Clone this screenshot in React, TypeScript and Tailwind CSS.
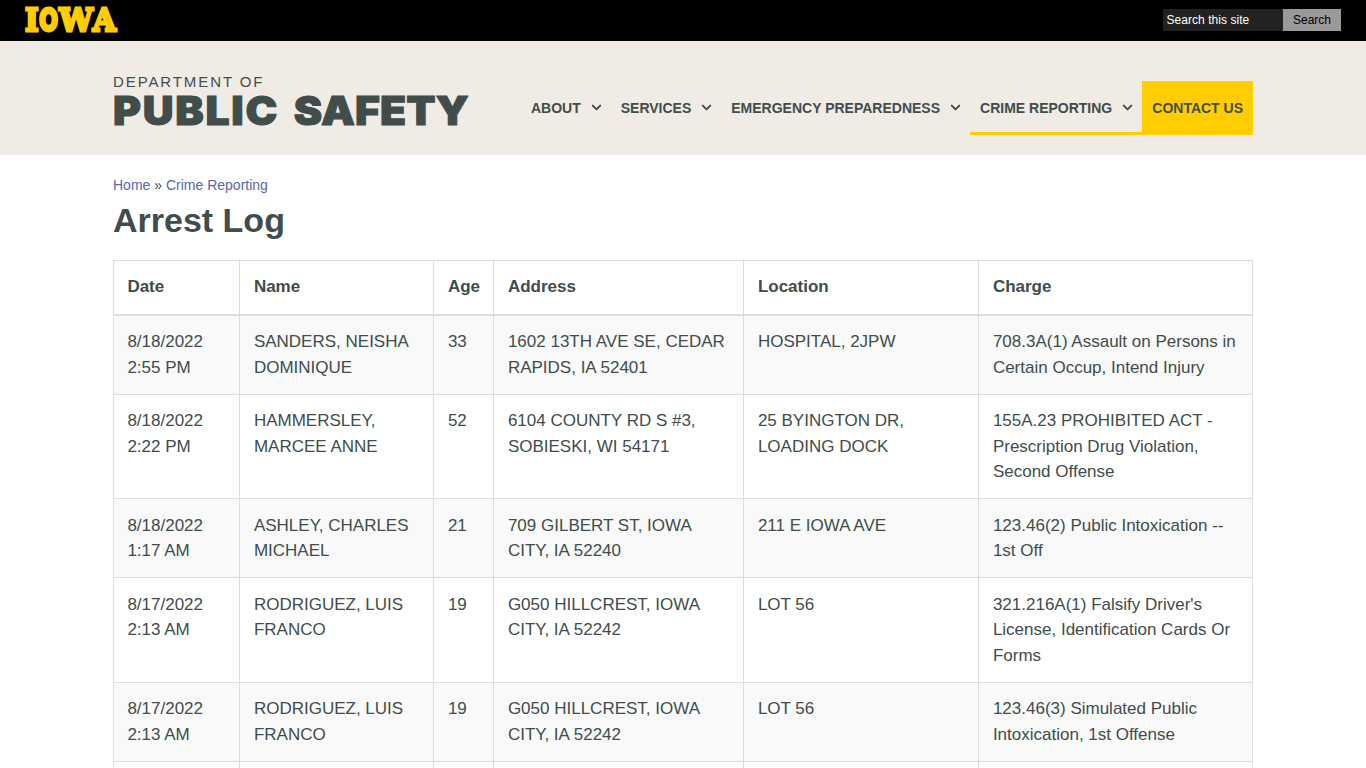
import { ChevronDown } from 'lucide-react';
import clsx from 'clsx';

interface IArrest {
  date: string;
  time: string;
  name: string;
  age: number;
  address: string;
  location: string;
  charge: string;
}

interface INavItem {
  label: string;
  hasMenu?: boolean;
  active?: boolean;
  highlight?: boolean;
}

const navItems: INavItem[] = [
  { label: 'About', hasMenu: true },
  { label: 'Services', hasMenu: true },
  { label: 'Emergency Preparedness', hasMenu: true },
  { label: 'Crime Reporting', hasMenu: true, active: true },
  { label: 'Contact Us', highlight: true },
];

const logoLetters = [
  { char: 'I', x: 1, width: 13.5, size: 32.5, y: 31.3, font: "font-['DejaVu_Serif',serif]" },
  { char: 'O', x: 15.2, width: 18.6, size: 31, y: 30.8, font: "font-['Inter',sans-serif]" },
  { char: 'W', x: 35.2, width: 33.5, size: 32.5, y: 31.3, font: "font-['DejaVu_Serif',serif]" },
  { char: 'A', x: 68.7, width: 23, size: 32.5, y: 31.3, font: "font-['DejaVu_Serif',serif]" },
];

const columns = [
  { label: 'Date', width: 'w-[126px]' },
  { label: 'Name', width: 'w-[194px]' },
  { label: 'Age', width: 'w-[60px]' },
  { label: 'Address', width: 'w-[250px]' },
  { label: 'Location', width: 'w-[235px]' },
  { label: 'Charge', width: 'w-[274px]' },
];

const arrests: IArrest[] = [
  {
    date: '8/18/2022',
    time: '2:55 PM',
    name: 'SANDERS, NEISHA DOMINIQUE',
    age: 33,
    address: '1602 13TH AVE SE, CEDAR RAPIDS, IA 52401',
    location: 'HOSPITAL, 2JPW',
    charge: '708.3A(1) Assault on Persons in Certain Occup, Intend Injury',
  },
  {
    date: '8/18/2022',
    time: '2:22 PM',
    name: 'HAMMERSLEY, MARCEE ANNE',
    age: 52,
    address: '6104 COUNTY RD S #3, SOBIESKI, WI 54171',
    location: '25 BYINGTON DR, LOADING DOCK',
    charge: '155A.23 PROHIBITED ACT - Prescription Drug Violation, Second Offense',
  },
  {
    date: '8/18/2022',
    time: '1:17 AM',
    name: 'ASHLEY, CHARLES MICHAEL',
    age: 21,
    address: '709 GILBERT ST, IOWA CITY, IA 52240',
    location: '211 E IOWA AVE',
    charge: '123.46(2) Public Intoxication -- 1st Off',
  },
  {
    date: '8/17/2022',
    time: '2:13 AM',
    name: 'RODRIGUEZ, LUIS FRANCO',
    age: 19,
    address: 'G050 HILLCREST, IOWA CITY, IA 52242',
    location: 'LOT 56',
    charge: "321.216A(1) Falsify Driver's License, Identification Cards Or Forms",
  },
  {
    date: '8/17/2022',
    time: '2:13 AM',
    name: 'RODRIGUEZ, LUIS FRANCO',
    age: 19,
    address: 'G050 HILLCREST, IOWA CITY, IA 52242',
    location: 'LOT 56',
    charge: '123.46(3) Simulated Public Intoxication, 1st Offense',
  },
];

function BrandBar() {
  return (
    <div className="flex h-[41px] items-start justify-between bg-black pr-[25px] pl-[24px]">
      <svg width="110" height="41" viewBox="0 0 110 41" role="img" aria-label="Iowa">
        {logoLetters.map((letter) => (
          <text
            key={letter.char}
            x={letter.x}
            y={letter.y}
            textLength={letter.width}
            lengthAdjust="spacingAndGlyphs"
            fontSize={letter.size}
            fontWeight="800"
            fill="#ffcd00"
            stroke="#ffcd00"
            strokeWidth="3"
            className={letter.font}
          >
            {letter.char}
          </text>
        ))}
      </svg>
      <form className="mt-[9px] flex h-[22px] text-xs">
        <input
          type="text"
          placeholder="Search this site"
          className="w-[120px] bg-[#222] px-[3.5px] tracking-[0.05px] text-white placeholder:text-white"
        />
        <button type="button" className="w-[58px] bg-[#999] text-black">
          Search
        </button>
      </form>
    </div>
  );
}

function NavLink({ item }: { item: INavItem }) {
  return (
    <a
      className={clsx(
        'flex h-[54px] items-center border-b-3 px-[10px] pt-[3px] text-[14px] font-bold uppercase whitespace-nowrap',
        item.active || item.highlight ? 'border-[#ffcd00]' : 'border-transparent',
        item.highlight && 'bg-[#ffcd00]'
      )}
    >
      {item.label}
      {item.hasMenu && <ChevronDown className="-mt-[2px] -mr-[3px] ml-2 size-[15px]" strokeWidth={3.2} />}
    </a>
  );
}

function Header() {
  return (
    <header className="h-[114px] bg-[#f0ebe4]">
      <div className="mx-auto flex w-[1140px] justify-between">
        <div className="w-[360px] pt-[32px]">
          <div className="text-[15px] leading-[18px] tracking-[1.9px] uppercase">Department of</div>
          <div className="origin-left scale-x-[1.08] font-['Inter','Liberation_Sans',sans-serif] text-[39.5px] leading-[40px] font-black whitespace-nowrap uppercase [-webkit-text-stroke:1px_#404d4b] [word-spacing:4px]">
            <span className="tracking-[1.6px]">Public </span>
            <span className="tracking-[0.1px]">Safety</span>
          </div>
        </div>
        <nav className="flex pt-[40px]">
          {navItems.map((item) => (
            <NavLink key={item.label} item={item} />
          ))}
        </nav>
      </div>
    </header>
  );
}

function ArrestTable() {
  return (
    <table className="w-[1139px] table-fixed border-collapse text-[17px] leading-[25.5px]">
      <colgroup>
        {columns.map((column) => (
          <col key={column.label} className={column.width} />
        ))}
      </colgroup>
      <thead>
        <tr>
          {columns.map((column) => (
            <th
              key={column.label}
              className="border border-b-2 border-[#ddd] px-[13.9px] pt-[13px] pb-[14px] text-left font-bold first:pl-[13.4px]"
            >
              {column.label}
            </th>
          ))}
        </tr>
      </thead>
      <tbody className="[&_td]:border [&_td]:border-[#ddd] [&_td]:px-[13.9px] [&_td]:py-[13.55px] [&_td]:align-top [&_td:first-child]:pl-[13.4px]">
        {arrests.map((arrest, index) => (
          <tr key={index} className="odd:bg-[#f9f9f9]">
            <td>
              {arrest.date}
              <br />
              {arrest.time}
            </td>
            <td>{arrest.name}</td>
            <td>{arrest.age}</td>
            <td>{arrest.address}</td>
            <td>{arrest.location}</td>
            <td>{arrest.charge}</td>
          </tr>
        ))}
        {/* next row, cut off by the viewport */}
        <tr>
          {columns.map((column) => (
            <td key={column.label}>&nbsp;</td>
          ))}
        </tr>
      </tbody>
    </table>
  );
}

export default function App() {
  return (
    <div className="h-screen overflow-hidden bg-white font-['Liberation_Sans',Arial,sans-serif] text-[#404d4b]">
      <BrandBar />
      <Header />
      <main className="mx-auto w-[1140px]">
        <div className="pt-[20px] text-[14px] leading-[20px]">
          <a className="text-[#5668a8]">Home</a> » <a className="text-[#5668a8]">Crime Reporting</a>
        </div>
        <h1 className="mt-[5px] mb-[19px] text-[34px] leading-[41px] font-bold">Arrest Log</h1>
        <ArrestTable />
      </main>
    </div>
  );
}
